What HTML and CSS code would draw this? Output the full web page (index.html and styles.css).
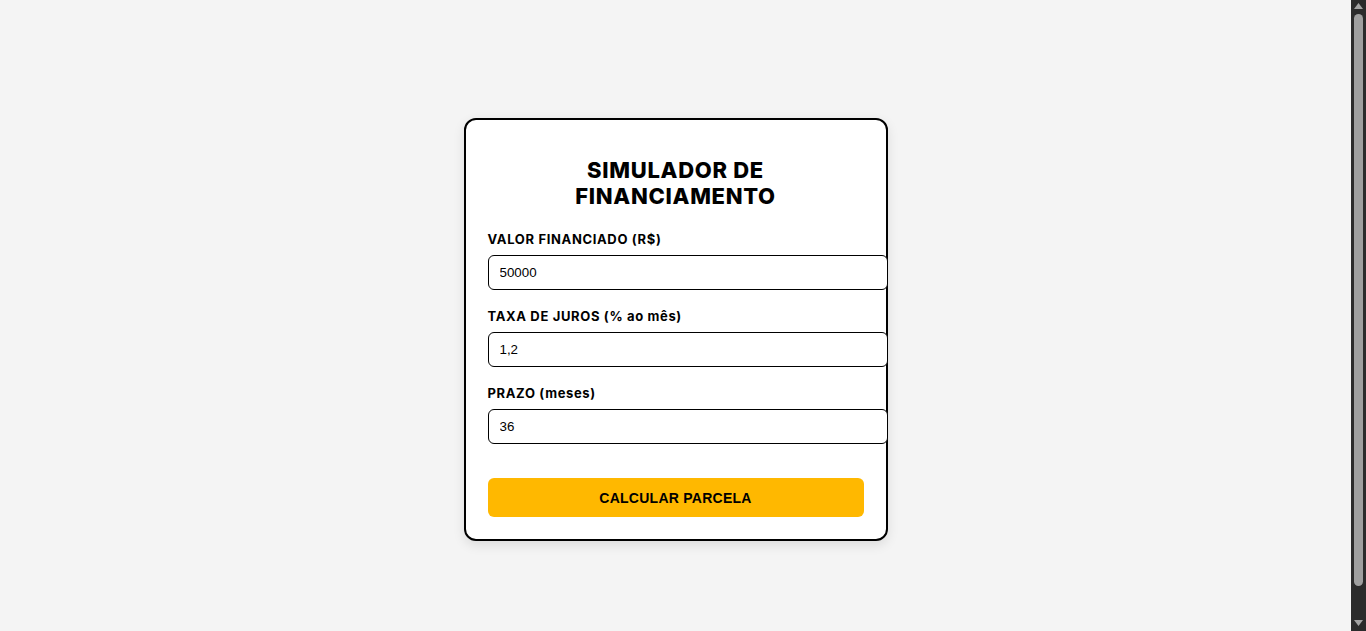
FILE: index.html
```html
<!DOCTYPE html>
<html lang="pt-BR">
<head>
<meta charset="utf-8">
<title>Simulador de Financiamento</title>
<link rel="stylesheet" href="styles.css">
</head>
<body>
  <main class="card">
    <h1 class="title">SIMULADOR DE FINANCIAMENTO</h1>
    <div class="field">
      <label class="label" for="valor">VALOR FINANCIADO (R$)</label>
      <input class="input" id="valor" type="text" value="50000">
    </div>
    <div class="field">
      <label class="label" for="taxa">TAXA DE JUROS (% ao mês)</label>
      <input class="input" id="taxa" type="text" value="1,2">
    </div>
    <div class="field">
      <label class="label" for="prazo">PRAZO (meses)</label>
      <input class="input" id="prazo" type="text" value="36">
    </div>
    <button class="button" type="button">CALCULAR PARCELA</button>
  </main>
  <div class="scrollbar" aria-hidden="true">
    <svg class="arrow" width="9" height="6" viewBox="0 0 9 6"><path d="M0 6 L4.5 0 L9 6 Z" fill="#a3a3a3"/></svg>
    <div class="thumb"></div>
    <svg class="arrow" width="9" height="6" viewBox="0 0 9 6"><path d="M0 0 L4.5 6 L9 0 Z" fill="#a3a3a3"/></svg>
  </div>
</body>
</html>
```
FILE: styles.css
```css
html {
  overflow: hidden;
}

body {
  margin: 0;
  padding: 14px 15px 14px 0;
  min-height: 100vh;
  background: #f4f4f4;
  color: #000;
  font-family: "Inter", "Liberation Sans", sans-serif;
  display: flex;
  align-items: center;
  justify-content: center;
}

.scrollbar {
  position: fixed;
  top: 0;
  right: 0;
  bottom: 0;
  width: 15px;
  background: #2b2b2b;
  display: flex;
  flex-direction: column;
  align-items: center;
  padding: 3px 0 5px;
  box-sizing: border-box;
}

.arrow {
  display: block;
  flex: none;
}

.thumb {
  width: 9px;
  height: 572px;
  margin-top: 5px;
  background: #9f9f9f;
  border-radius: 5px;
  flex: none;
}

.scrollbar .arrow:last-child {
  margin-top: auto;
}

.card {
  width: 376px;
  padding: 22px;
  background: #fff;
  border: 2px solid #000;
  border-radius: 12px;
  box-shadow: 0 4px 12px rgba(0, 0, 0, 0.1);
}

.title {
  margin: 15px 0 22px;
  font-size: 22px;
  line-height: 26px;
  font-weight: 800;
  text-align: center;
  letter-spacing: 0.7px;
}

.field {
  display: flex;
  flex-direction: column;
  margin-bottom: 18px;
}

.label {
  font-size: 13px;
  line-height: 16px;
  font-weight: 700;
  margin-bottom: 8px;
  letter-spacing: 0.65px;
}

.input {
  width: 100%;
  padding: 9px 11px;
  font-family: "Liberation Sans", Arial, sans-serif;
  font-size: 13.333px;
  line-height: 15px;
  color: #000;
  background: #fff;
  border: 1px solid #000;
  border-radius: 6px;
  outline: none;
}

.button {
  display: block;
  width: 100%;
  height: 39px;
  margin-top: 34px;
  border: none;
  border-radius: 6px;
  background: #ffb800;
  color: #000;
  font-family: "Liberation Sans", Arial, sans-serif;
  font-size: 14px;
  font-weight: 700;
  letter-spacing: 0.25px;
}
```
